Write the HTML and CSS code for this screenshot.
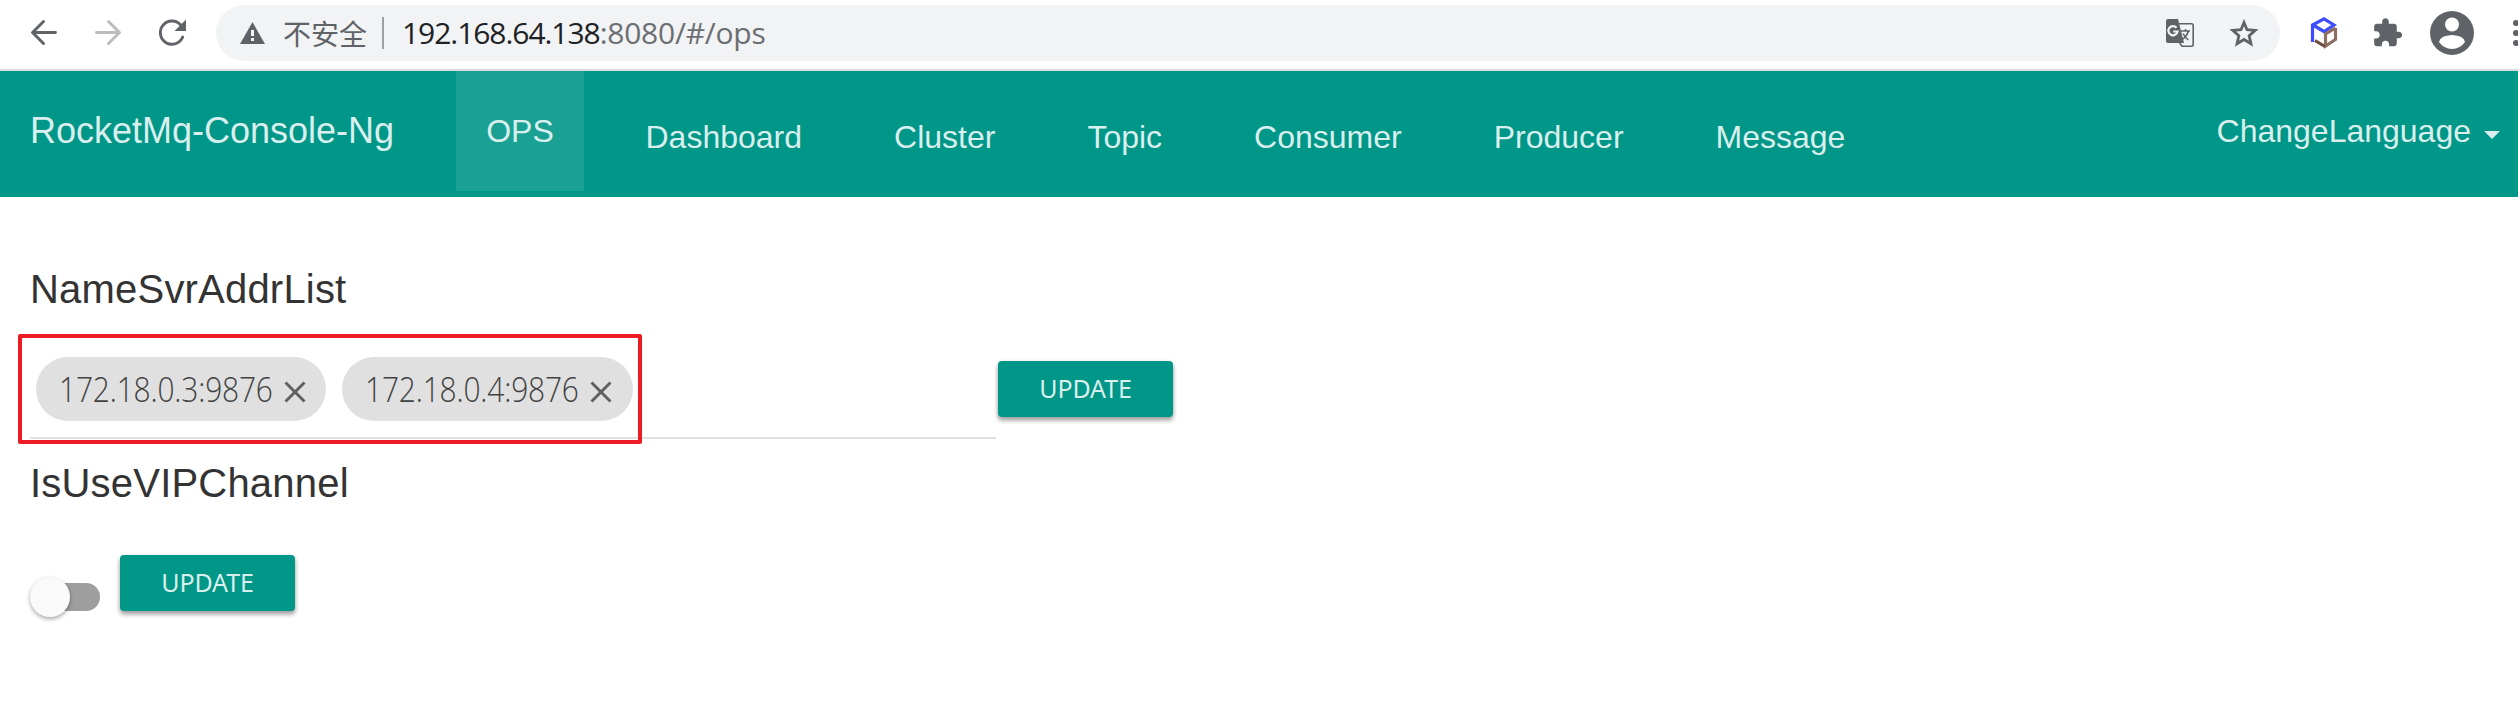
FILE: index.html
```html
<!DOCTYPE html>
<html lang="zh-CN">
<head>
<meta charset="utf-8">
<title>RocketMq-Console-Ng</title>
<link rel="stylesheet" href="styles.css">
</head>
<body>
<div class="toolbar">
  <svg class="nav-icons" width="216" height="69" viewBox="0 0 216 69" fill="none" stroke-width="2.9">
    <path stroke="#5f6368" stroke-linecap="round" stroke-linejoin="round" d="M55.500 32.500H33M43.500 21.500L32.500 32.500L43.500 43.500"/>
    <path stroke="#babcbe" stroke-linecap="round" stroke-linejoin="round" d="M96.500 32.500H119M108.500 21.500L119.500 32.500L108.500 43.500"/>
    <path stroke="#5f6368" stroke-linecap="round" d="M182.700 37A11.600 11.600 0 1 1 180.500 24.800"/>
    <path fill="#5f6368" d="M186 19.500V31H174.500Z"/>
  </svg>
  <div class="omnibox">
    <svg class="warn" width="25" height="22" viewBox="0 0 25 22"><path fill="#5f6368" d="M12.500 0L25 22H0Z"/><path fill="#f1f3f4" d="M11 8h3v6h-3zM11 16h3v3h-3z"/></svg>
    <span class="insecure">不安全</span>
    <span class="divider"></span>
    <span class="url"><span class="host">192.168.64.138</span><span class="path">:8080/#/ops</span></span>
    <svg class="translate" width="28" height="28" viewBox="0 0 28 28">
      <path fill="none" stroke="#5f6368" stroke-width="1.600" d="M13 4.800H25.500Q27.200 4.800 27.200 6.500V25.500Q27.200 27.200 25.500 27.200H16L13 23"/>
      <path fill="#5f6368" d="M2 0H12L18 24H2Q0 24 0 22V2Q0 0 2 0Z"/>
      <path fill="none" stroke="#f1f3f4" stroke-width="2.200" d="M10.500 8.700A4.600 4.600 0 1 0 11.500 12.500H7.300"/>
      <path fill="none" stroke="#5f6368" stroke-width="1.500" d="M15 12H24M19.500 10V12M22.500 12Q21 17 16.500 20.500M17 14.500Q19 18.500 22.500 21"/>
    </svg>
    <svg class="star" width="30" height="28" viewBox="0 0 30 28"><path fill="none" stroke="#5f6368" stroke-width="2.800" d="M15 3.500L18 10.700L26.200 11.400L20.100 16.700L22 24.800L15 20.500L8 24.800L9.900 16.700L3.800 11.400L12 10.700Z"/></svg>
  </div>
  <svg class="extensions" width="238" height="69" viewBox="2280 0 238 69">
    <g fill="none" stroke-width="3.200">
      <path stroke="#3d4eff" d="M2312.500 42V25L2324 18.800L2334 25L2324 31.500L2313 25"/>
      <path stroke="#8d6e63" d="M2335.500 28V39.500L2325.500 46V34L2335.500 28"/>
      <path stroke="#6d4c41" d="M2315 40.500L2325 46.500"/>
    </g>
    <path fill="#5f6368" transform="translate(2371.500 17) scale(1.330)" d="M20.500 11H19V7c0-1.100-.9-2-2-2h-4V3.500C13 2.120 11.880 1 10.500 1S8 2.120 8 3.500V5H4c-1.100 0-1.990.9-1.990 2v3.800H3.500c1.490 0 2.700 1.210 2.700 2.700s-1.210 2.700-2.700 2.700H2V20c0 1.100.9 2 2 2h3.800v-1.500c0-1.490 1.210-2.700 2.700-2.700 1.490 0 2.700 1.210 2.700 2.700V22H17c1.100 0 2-.9 2-2v-4h1.500c1.380 0 2.500-1.120 2.500-2.500S21.880 11 20.500 11z"/>
    <circle cx="2452" cy="33" r="22" fill="#5f6368"/>
    <circle cx="2452" cy="24.500" r="7" fill="#fff"/>
    <path fill="#fff" d="M2439 42Q2440 35.500 2452 35Q2464 35.500 2465 42Q2460 49 2452 49Q2444 49 2439 42Z"/>
    <g fill="#5f6368"><circle cx="2516" cy="23" r="3"/><circle cx="2516" cy="33" r="3"/><circle cx="2516" cy="43" r="3"/></g>
  </svg>
</div>
<nav class="navbar">
  <a class="brand">RocketMq-Console-Ng</a>
  <a class="ops">OPS</a>
  <div class="links"><a>Dashboard</a><a>Cluster</a><a>Topic</a><a>Consumer</a><a>Producer</a><a>Message</a></div>
  <a class="language">ChangeLanguage<span class="caret"></span></a>
</nav>
<main>
  <h2 class="h-name">NameSvrAddrList</h2>
  <div class="row">
    <div class="chips">
      <div class="chip"><span>172.18.0.3:9876</span><svg width="22" height="22" viewBox="0 0 22 22"><path d="M1.500 1.500L20.500 20.500M20.500 1.500L1.500 20.500"/></svg></div>
      <div class="chip"><span>172.18.0.4:9876</span><svg width="22" height="22" viewBox="0 0 22 22"><path d="M1.500 1.500L20.500 20.500M20.500 1.500L1.500 20.500"/></svg></div>
      <div class="highlight"></div>
    </div>
    <button class="btn">UPDATE</button>
  </div>
  <h2 class="h-vip">IsUseVIPChannel</h2>
  <div class="row vip">
    <div class="switch"><span class="thumb"></span></div>
    <button class="btn">UPDATE</button>
  </div>
</main>
</body>
</html>
```
FILE: styles.css
```css
* { box-sizing: border-box; }
body { margin: 0; background: #fff; width: 2518px; height: 713px; overflow: hidden; font-family: "Liberation Sans", Arial, sans-serif; color: #333; }
svg { display: block; flex: none; }
.toolbar { height: 71px; display: flex; border-bottom: 2px solid #dadce0; }
.omnibox { width: 2064px; height: 56px; margin-top: 5px; border-radius: 28px; background: #f1f3f4; display: flex; align-items: center; padding: 0 21px 0 24px; font-family: "Open Sans", "Noto Sans CJK SC", sans-serif; color: #5f6368; }
.insecure { font: 400 28px/40px "Noto Sans CJK SC", sans-serif; margin-left: 18px; width: 85px; white-space: nowrap; }
.divider { width: 2px; height: 32px; background: #9aa0a6; margin-left: 14px; }
.url { margin-left: 18px; font-size: 30px; line-height: 40px; white-space: nowrap; letter-spacing: -1.05px; }
.host { color: #202124; }
.path { color: #6b6e72; letter-spacing: -.25px; }
.translate { margin-left: auto; }
.star { margin-left: 35px; }
.navbar { height: 126px; background: #009688; color: #d9efed; display: flex; align-items: flex-start; font-size: 32px; white-space: nowrap; }
.brand { font-size: 36px; line-height: 120px; padding-left: 30px; width: 456px; }
.ops { width: 128px; height: 120px; line-height: 120px; text-align: center; background: #1ba193; }
.links { display: flex; gap: 92px; margin-left: 61.500px; line-height: 132px; }
.language { margin-left: auto; display: flex; align-items: center; line-height: 120px; padding-right: 18px; }
.caret { border: 8px solid transparent; border-top-color: currentColor; border-bottom: 0; margin: 7px 0 0 13px; }
main { padding: 69px 30px 0; }
h2 { margin: 0; font-size: 40px; line-height: 46px; font-weight: 400; letter-spacing: .2px; }
.row { display: flex; align-items: flex-start; }
.chips { position: relative; width: 966px; height: 104px; margin-top: 23px; padding: 22px 6px 0; border-bottom: 2px solid #e0e0e0; display: flex; gap: 16px; }
.chip { width: 290px; height: 64px; border-radius: 32px; background: #e0e0e0; color: #424242; display: flex; align-items: center; padding-left: 23px; font: 300 34px/64px "Open Sans", sans-serif; }
.chip:nth-child(2) { width: 291px; }
.chip span { width: 225px; white-space: nowrap; transform: scaleX(.88); transform-origin: left; letter-spacing: -.200px; }
.chip svg { margin-top: 5px; fill: none; stroke: #616161; stroke-width: 3; }
.highlight { position: absolute; left: -12px; top: -1px; width: 624px; height: 110px; border: 4px solid #ed1c24; border-radius: 2px; }
.btn { width: 175px; height: 56px; margin: 49px 0 0 2px; padding: 0 0 2px; border: 0; border-radius: 4px; background: #009688; color: #d9efed; font: 25px/54px "Noto Sans", "Open Sans", sans-serif; letter-spacing: -.1px; box-shadow: 0 2px 5px rgba(0,0,0,.26), 0 4px 4px rgba(0,0,0,.2); }
.h-vip { margin-top: 21px; }
.vip .btn { margin: 49px 0 0 20px; }
.switch { position: relative; width: 70px; height: 40px; margin-top: 71px; }
.switch::before { content: ""; position: absolute; left: 2px; top: 6px; width: 68px; height: 28px; border-radius: 14px; background: #9e9e9e; }
.thumb { position: absolute; left: 0; top: 0; width: 40px; height: 40px; border-radius: 50%; background: #fafafa; box-shadow: 0 2px 4px rgba(0,0,0,.35); }
```
